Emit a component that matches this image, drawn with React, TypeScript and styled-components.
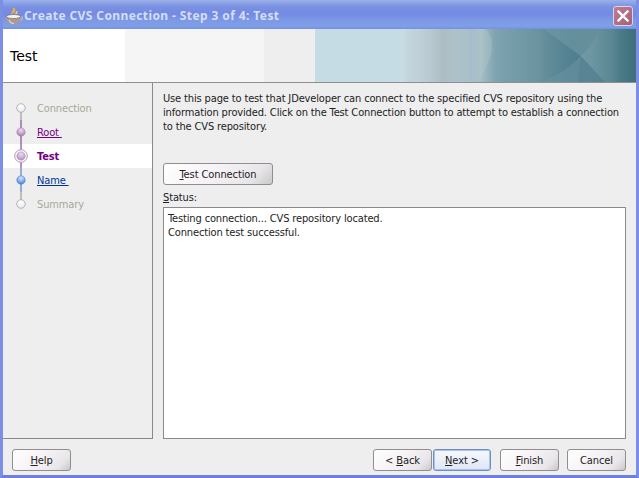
import React from "react";
import styled, { createGlobalStyle } from "styled-components";

const Global = createGlobalStyle`
  html, body { margin: 0; padding: 0; background: #eeeeee; }
  * { box-sizing: border-box; }
`;

const UI = `"DejaVu Sans", "Noto Sans", sans-serif`;

const Win = styled.div`
  width: 639px;
  height: 478px;
  display: flex;
  flex-direction: column;
  font: 11px/14px ${UI};
  font-stretch: condensed;
  letter-spacing: -0.14px;
  color: #222;
  background: #eeeeee;
  border-left: 3px solid #7b8fe4;
  border-right: 3px solid #7b8fe4;
  border-bottom: 3px solid #6d80dd;
  overflow: hidden;
`;
const TitleBar = styled.div`
  height: 29px;
  margin: 0 -3px;
  flex: none;
  display: flex;
  align-items: center;
  padding: 3px 6px 0 5px;
  background: linear-gradient(180deg, #9db1ea 0, #8ba3e6 3px, #7a90e2 7px, #7489e3 14px, #7d98e6 20px, #7f9fe8 26px, #7690e2 29px);
`;
const TitleText = styled.div`
  flex: 1;
  margin-left: 1px;
  font: bold 12px/16px "Noto Sans", sans-serif;
  letter-spacing: 0.4px;
  color: #d3dff6;
  white-space: nowrap;
`;
const CloseBtn = styled.div`
  width: 20px;
  height: 20px;
  margin-top: -1px;
  border: 1px solid #d8d4ea;
  border-radius: 3px;
  background: linear-gradient(135deg, #bf7d92, #a85f78);
  display: flex;
  align-items: center;
  justify-content: center;
`;
const Header = styled.div`
  height: 54px;
  flex: none;
  display: flex;
  border-bottom: 1px solid #8f8f8f;
`;
const HeaderTitle = styled.div`
  width: 122px;
  background: #fff;
  padding: 19px 0 0 7px;
  font: 500 14px/17px ${UI};
  font-stretch: normal;
  letter-spacing: 0;
  color: #000;
`;
const HeaderBandA = styled.div`
  width: 139px;
  background: #f5f5f5;
`;
const HeaderBandB = styled.div`
  width: 51px;
  background: #eeeeee;
`;
const Banner = styled.svg`
  flex: 1;
  height: 53px;
  display: block;
`;
const Main = styled.div`
  flex: 1;
  display: flex;
  min-height: 0;
`;
const Side = styled.div`
  width: 150px;
  flex: none;
  border-right: 1px solid #8a8a8a;
  border-bottom: 1px solid #8a8a8a;
  padding-top: 13px;
  background: #eeeeee;
`;
const Step = styled.div<{ $active?: boolean }>`
  height: 24px;
  display: flex;
  align-items: center;
  padding-left: 6px;
  background: ${(p) => (p.$active ? "#fff" : "transparent")};
`;
const Marker = styled.svg`
  width: 24px;
  height: 24px;
  flex: none;
  display: block;
`;
const StepLabel = styled.span<{ $color: string; $bold?: boolean; $link?: boolean }>`
  margin-left: 4px;
  padding-top: 1px;
  color: ${(p) => p.$color};
  font-weight: ${(p) => (p.$bold ? 700 : 400)};
  text-decoration: ${(p) => (p.$link ? "underline" : "none")};
`;
const Content = styled.div`
  flex: 1;
  display: flex;
  flex-direction: column;
  padding: 8px 10px 0 10px;
  min-width: 0;
`;
const Intro = styled.p`
  margin: 0;
  height: 72px;
  padding-top: 1px;
  color: #222;
  white-space: nowrap;
`;
const Btn = styled.button<{ $w: number; $default?: boolean }>`
  width: ${(p) => p.$w}px;
  height: 22px;
  padding: 1px 0 0;
  flex: none;
  font: 11px/14px ${UI};
  font-stretch: condensed;
  letter-spacing: -0.1px;
  color: #222;
  border-radius: 3px;
  border: 1px solid ${(p) => (p.$default ? "#6f8fc4" : "#8f8f8f")};
  background: ${(p) =>
    p.$default
      ? "linear-gradient(180deg, #f6f8fc, #dfe7f5)"
      : "linear-gradient(135deg, #ffffff 0, #f6f2f6 45%, #e9e6e9 80%, #c9c9c9 100%)"};
  box-shadow: ${(p) => (p.$default ? "inset 0 0 0 1px #a9c3ec" : "none")};
  u { text-decoration: underline; }
`;
const StatusLabel = styled.label`
  margin-top: 4px;
  height: 18px;
  display: block;
  padding-top: 2px;
`;
const StatusBox = styled.div`
  flex: 1;
  background: #fff;
  border: 1px solid #8a8a8a;
  padding: 4px 4px;
`;
const Footer = styled.div`
  height: 36px;
  flex: none;
  display: flex;
  align-items: flex-start;
  padding: 10px 10px 0 9px;
`;
const Spacer = styled.div`
  flex: 1;
`;
const FooterGap = styled.div<{ $w: number }>`
  width: ${(p) => p.$w}px;
  flex: none;
`;

const Cup = () => (
  <svg width="18" height="18" viewBox="0 0 18 18">
    <path d="M7 7c-1-2 3-3 1.500-6 2.500 2 0 3.500 1 5" fill="none" stroke="#f0ae35" strokeWidth="1.600" />
    <path d="M10 7c2 0 2.500-1.500 1.500-3" fill="none" stroke="#f6d27c" strokeWidth="1.300" />
    <path d="M1 10c0 5 3 7.500 7.500 7.500S16 15 16 10z" fill="#a89c94" />
    <path d="M4 13c1 2.500 3 3.500 5 3.500" fill="none" stroke="#d8d2cc" strokeWidth="1.200" />
    <ellipse cx="8.500" cy="9.500" rx="7" ry="2" fill="#f6f3ee" stroke="#6f6a78" strokeWidth="0.700" />
    <path d="M16 10c2-.6 2 2.500-.6 3.400" fill="none" stroke="#c8bcae" strokeWidth="1.100" />
  </svg>
);

const CloseX = () => (
  <svg width="12" height="12" viewBox="0 0 12 12">
    <path d="M1.500 1.500l9 9M10.500 1.500l-9 9" stroke="#fff" strokeWidth="2.400" strokeLinecap="square" />
  </svg>
);

type Dot = "gray" | "purple" | "current" | "blue";

const StepMark = ({ dot, top, bottom }: { dot: Dot; top?: string; bottom?: string }) => {
  const id = `g-${dot}`;
  const stops: Record<string, [string, string]> = {
    gray: ["#ffffff", "#e6e6f2"],
    purple: ["#ecdcef", "#a477ab"],
    current: ["#ecdcef", "#b48bbb"],
    blue: ["#d8e8fc", "#3f7fd8"],
  };
  const rim = dot === "gray" ? "#a8a8a8" : dot === "blue" ? "#4a78c0" : "#a888b0";
  return (
    <Marker viewBox="0 0 24 24">
      <defs>
        <radialGradient id={id} cx="50%" cy="30%" r="70%">
          <stop offset="0" stopColor={stops[dot][0]} />
          <stop offset="1" stopColor={stops[dot][1]} />
        </radialGradient>
      </defs>
      {top && <line x1="12" y1="0" x2="12" y2="12" stroke={top} />}
      {bottom && <line x1="12" y1="12" x2="12" y2="24" stroke={bottom} />}
      {dot === "current" && <circle cx="12" cy="12" r="6.300" fill="#fff" stroke="#b790bf" />}
      <circle cx="12" cy="12" r="4.300" fill={`url(#${id})`} stroke={rim} strokeWidth={dot === "gray" ? 0.8 : 0.4} />
    </Marker>
  );
};

const stripes: [number, string][] = [
  [0, "#c5dce5"], [89, "#c5dce5"], [92, "#c5d5dc"], [104, "#bfd0da"], [116, "#b8c8d0"], [128, "#adbdc4"],
  [140, "#aec2c8"], [150, "#a8bfcc"], [156, "#9db8cc"], [165, "#a6bec6"], [180, "#7fa3b0"], [205, "#7299a6"],
  [230, "#67909c"], [255, "#5b8a98"], [275, "#5f8a96"], [295, "#55838f"], [310, "#457682"], [320, "#3f6e7c"],
];

const BannerArt = () => (
  <Banner viewBox="0 0 320 53" preserveAspectRatio="none">
    <defs>
      <linearGradient id="bn">
        {stripes.map(([x, c]) => (
          <stop key={x} offset={x / 320} stopColor={c} />
        ))}
      </linearGradient>
      <linearGradient id="dk" x1="0" x2="1" y1="0" y2="0">
        <stop offset="0" stopColor="#3c6a80" stopOpacity="0.03" />
        <stop offset="1" stopColor="#3c6a80" stopOpacity="0.38" />
      </linearGradient>
      <linearGradient id="lt" x1="0" x2="1" y1="0" y2="0">
        <stop offset="0" stopColor="#9cc0c8" stopOpacity="0.3" />
        <stop offset="1" stopColor="#9cc0c8" stopOpacity="0" />
      </linearGradient>
    </defs>
    <rect width="320" height="53" fill="url(#bn)" />
    <path d="M150 0h20c8 8 8 20 4 30-3 9-7 16-12 23h-12z" fill="#b4c8cc" opacity="0.35" />
    <path d="M228 0L265 27C254 39 240 48 225 53V0z" fill="url(#dk)" />
    <path d="M265 27L289 53H225C240 48 254 39 265 27z" fill="#6f93a4" opacity="0.22" />
    <path d="M282 0C280 10 273 20 265 27L289 53H305V0z" fill="url(#lt)" />
    <path d="M265 27L289 53H262z" fill="#3c6a80" opacity="0.2" />
    <path d="M228 0L265 27C273 20 280 10 282 0z" fill="#8ab0b8" opacity="0.15" />
  </Banner>
);

export default function App() {
  return (
    <>
      <Global />
      <Win>
        <TitleBar>
          <Cup />
          <TitleText>Create CVS Connection - Step 3 of 4: Test</TitleText>
          <CloseBtn>
            <CloseX />
          </CloseBtn>
        </TitleBar>
        <Header>
          <HeaderTitle>Test</HeaderTitle>
          <HeaderBandA />
          <HeaderBandB />
          <BannerArt />
        </Header>
        <Main>
          <Side>
            <Step>
              <StepMark dot="gray" bottom="#8f8f8f" />
              <StepLabel $color="#a8a89a">Connection</StepLabel>
            </Step>
            <Step>
              <StepMark dot="purple" top="#6a2d84" bottom="#6a2d84" />
              <StepLabel $color="#74007f" $link>Root&nbsp;</StepLabel>
            </Step>
            <Step $active>
              <StepMark dot="current" top="#6a2d84" bottom="#6a2d84" />
              <StepLabel $color="#74007f" $bold>Test</StepLabel>
            </Step>
            <Step>
              <StepMark dot="blue" top="#3a6cc0" bottom="#3a6cc0" />
              <StepLabel $color="#003399" $link>Name&nbsp;</StepLabel>
            </Step>
            <Step>
              <StepMark dot="gray" top="#8f8f8f" />
              <StepLabel $color="#a8a89a">Summary</StepLabel>
            </Step>
          </Side>
          <Content>
            <Intro>
              Use this page to test that JDeveloper can connect to the specified CVS repository using the
              <br />
              information provided. Click on the Test Connection button to attempt to establish a connection
              <br />
              to the CVS repository.
            </Intro>
            <Btn $w={110}>
              <u>T</u>est Connection
            </Btn>
            <StatusLabel>
              <u>S</u>tatus:
            </StatusLabel>
            <StatusBox>
              Testing connection... CVS repository located.
              <br />
              Connection test successful.
            </StatusBox>
          </Content>
        </Main>
        <Footer>
          <Btn $w={59}>
            <u>H</u>elp
          </Btn>
          <Spacer />
          <Btn $w={59}>
            &lt; <u>B</u>ack
          </Btn>
          <FooterGap $w={1} />
          <Btn $w={58} $default>
            <u>N</u>ext &gt;
          </Btn>
          <FooterGap $w={9} />
          <Btn $w={59}>
            <u>F</u>inish
          </Btn>
          <FooterGap $w={8} />
          <Btn $w={59}>Cancel</Btn>
        </Footer>
      </Win>
    </>
  );
}
